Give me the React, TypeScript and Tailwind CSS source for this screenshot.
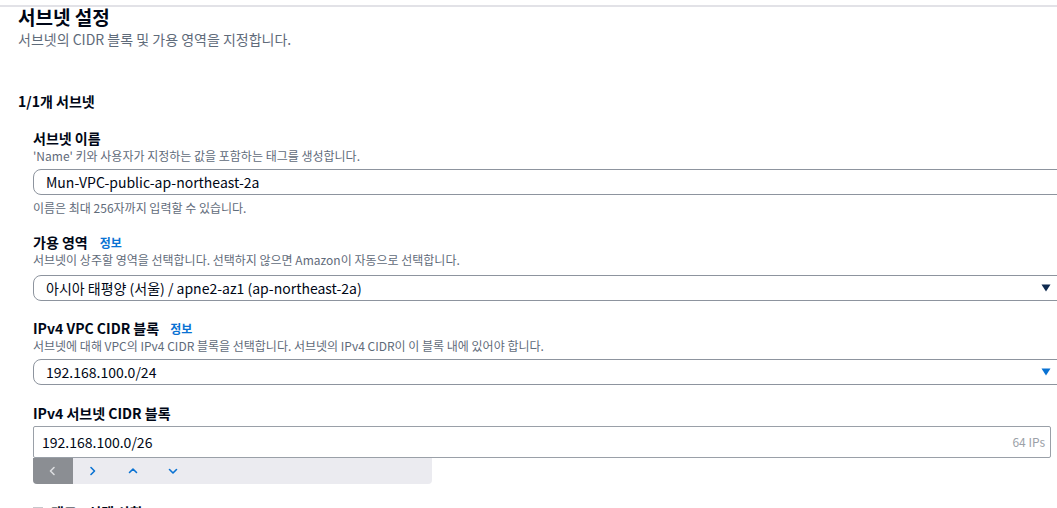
import React from "react";

const Chevron = ({ dir, color }: { dir: "l" | "r" | "u" | "d"; color: string }) => {
  const pts: Record<string, string> = {
    l: "6,1.5 2.5,5 6,8.5",
    r: "3,1.5 6.5,5 3,8.5",
    u: "1.5,6.5 5,3 8.5,6.5",
    d: "1.5,3.5 5,7 8.5,3.5",
  };
  return (
    <svg width="10" height="10" viewBox="0 0 10 10">
      <polyline points={pts[dir]} fill="none" stroke={color} strokeWidth="1.6" strokeLinecap="round" strokeLinejoin="round" />
    </svg>
  );
};

const Caret = ({ color }: { color: string }) => (
  <svg width="10" height="8" viewBox="0 0 10 8">
    <polygon points="0.5,0.5 9.5,0.5 5,7.5" fill={color} />
  </svg>
);

export default function App() {
  return (
    <div
      className="w-[1057px] h-[508px] overflow-hidden bg-white text-[#000716]"
      style={{ fontFamily: '"Noto Sans CJK KR", "Noto Sans", sans-serif' }}
    >
      <div className="h-[5px]" />
      <div className="h-[2px] bg-[#e2e2e7]" />
      <div className="pl-[18px]">
        <h2 className="text-[19px] leading-[20px] font-bold">서브넷 설정</h2>
        <p className="mt-[3px] text-[14px] leading-[18px] text-[#5f6b7a]">
          서브넷의 CIDR 블록 및 가용 영역을 지정합니다.
        </p>
        <div className="mt-[44px] text-[14px] leading-[18px] font-bold">1/1개 서브넷</div>

        <div className="pl-[15px]">
          {/* 서브넷 이름 */}
          <div className="mt-[19px] text-[14px] leading-[18px] font-bold">서브넷 이름</div>
          <div className="mt-[1px] text-[12px] leading-[16px] text-[#5f6b7a]">
            'Name' 키와 사용자가 지정하는 값을 포함하는 태그를 생성합니다.
          </div>
          <div className="mt-[5px] w-[1040px] h-[26px] border border-[#8d949e] rounded-[8px] flex items-center pl-[12px] text-[14px]">
            Mun-VPC-public-ap-northeast-2a
          </div>
          <div className="mt-[5px] text-[12px] leading-[16px] text-[#5f6b7a]">
            이름은 최대 256자까지 입력할 수 있습니다.
          </div>

          {/* 가용 영역 */}
          <div className="mt-[17px] flex items-baseline gap-[12px] leading-[18px]">
            <span className="text-[14px] font-bold">가용 영역</span>
            <span className="text-[12px] font-bold text-[#0972d3]">정보</span>
          </div>
          <div className="text-[12px] leading-[16px] text-[#5f6b7a]">
            서브넷이 상주할 영역을 선택합니다. 선택하지 않으면 Amazon이 자동으로 선택합니다.
          </div>
          <div className="mt-[7px] w-[1040px] h-[26px] border border-[#8d949e] rounded-[8px] flex items-center justify-between pl-[12px] pr-[21px] text-[14px]">
            <span>아시아 태평양 (서울) / apne2-az1 (ap-northeast-2a)</span>
            <Caret color="#0f2a4f" />
          </div>

          {/* IPv4 VPC CIDR 블록 */}
          <div className="mt-[18px] flex items-baseline gap-[11px] leading-[18px]">
            <span className="text-[14px] font-bold">IPv4 VPC CIDR 블록</span>
            <span className="text-[12px] font-bold text-[#0972d3]">정보</span>
          </div>
          <div className="text-[12px] leading-[16px] text-[#5f6b7a]">
            서브넷에 대해 VPC의 IPv4 CIDR 블록을 선택합니다. 서브넷의 IPv4 CIDR이 이 블록 내에 있어야 합니다.
          </div>
          <div className="mt-[5px] w-[1040px] h-[26px] border border-[#8d949e] rounded-[8px] flex items-center justify-between pl-[12px] pr-[21px] text-[14px]">
            <span>192.168.100.0/24</span>
            <Caret color="#0972d3" />
          </div>

          {/* IPv4 서브넷 CIDR 블록 */}
          <div className="mt-[19px] text-[14px] leading-[18px] font-bold">IPv4 서브넷 CIDR 블록</div>
          <div className="mt-[4px] w-[1018px] h-[32px] border border-[#9aa0a8] rounded-[2px] flex items-center justify-between pl-[8px] pr-[5px]">
            <span className="text-[14px]">192.168.100.0/26</span>
            <span className="text-[12px] text-[#9ba1a8]">64 IPs</span>
          </div>
          <div className="w-[399px] h-[26px] bg-[#ebebf0] rounded-b-[4px] flex">
            <div className="w-[40px] h-full bg-[#8b8e93] rounded-bl-[4px] flex items-center justify-center">
              <Chevron dir="l" color="#dcdde0" />
            </div>
            <div className="w-[40px] h-full flex items-center justify-center">
              <Chevron dir="r" color="#0972d3" />
            </div>
            <div className="w-[40px] h-full flex items-center justify-center">
              <Chevron dir="u" color="#0972d3" />
            </div>
            <div className="w-[40px] h-full flex items-center justify-center">
              <Chevron dir="d" color="#0972d3" />
            </div>
          </div>

          {/* 태그 section (cut off) */}
          <div className="mt-[19px] flex items-center gap-[8px] leading-[18px]">
            <span className="inline-block w-[10px] h-[10px] border border-[#c6c8cc] bg-[#f2f2f4]" />
            <span className="text-[14px] font-bold">태그 - 선택 사항</span>
          </div>
        </div>
      </div>
    </div>
  );
}
